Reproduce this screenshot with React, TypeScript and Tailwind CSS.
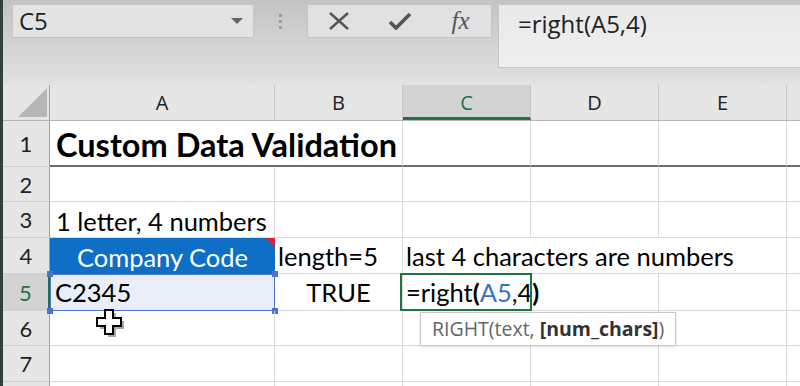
import React from "react";

const cellFont = { fontFamily: "Lato, 'Open Sans', sans-serif" };
const uiFont = { fontFamily: "'Open Sans', 'Noto Sans', sans-serif" };

const cols = [
  { key: "A", w: "w-[225px]" },
  { key: "B", w: "w-[128px]" },
  { key: "C", w: "w-[128px]" },
  { key: "D", w: "w-[128px]" },
  { key: "E", w: "w-[128px]" },
];

const RowHead = ({ n, h, active }: { n?: number; h: string; active?: boolean }) => (
  <div
    className={`${h} w-[47px] shrink-0 flex items-center justify-center text-[22px] border-b border-[#cfcfcf] ${
      active ? "bg-[#d3d3d3] text-[#217346] border-r-2 border-r-[#217346]" : "bg-[#e6e6e6] text-[#222] border-r border-r-[#9e9e9e]"
    }`}
    style={cellFont}
  >
    {n}
  </div>
);

const Cell = ({ w, className = "", children }: { w: string; className?: string; children?: React.ReactNode }) => (
  <div className={`${w} shrink-0 border-r border-b border-[#dadada] flex items-center ${className}`}>{children}</div>
);

const Cursor = () => (
  <svg width="30" height="30" viewBox="0 0 30 30">
    <path d="M11 3h8v8h8v8h-8v8h-8v-8H3v-8h8z" fill="#000" opacity="0.35" transform="translate(2 2)" />
    <path d="M10 2h8v8h8v8h-8v8h-8v-8H2v-8h8z" fill="#fff" stroke="#000" strokeWidth="2" />
  </svg>
);

export default function App() {
  return (
    <div className="relative w-[800px] h-[386px] overflow-hidden bg-white border-l-[3px] border-[#34403a]" style={cellFont}>
      {/* formula bar */}
      <div className="h-[85px] flex items-start pt-[4px] bg-gradient-to-b from-[#c3c3c3] to-[#e2e2e2]">
        <div className="ml-[9px] w-[242px] h-[34px] flex items-center justify-between pl-[6px] pr-[5px] bg-[#e3e3e3] border border-[#c6c6c6]">
          <span className="text-[24px] text-[#222]" style={uiFont}>
            C5
          </span>
          <svg width="12" height="8" viewBox="0 0 12 8" className="mr-[5px]">
            <path d="M0 1h12L6 7z" fill="#666" />
          </svg>
        </div>
        <div className="w-[53px] h-[34px] flex flex-col items-center justify-center gap-[3px]">
          <span className="w-[3px] h-[3px] bg-[#9d9d9d]" />
          <span className="w-[3px] h-[3px] bg-[#9d9d9d]" />
          <span className="w-[3px] h-[3px] bg-[#9d9d9d]" />
        </div>
        <div className="w-[185px] h-[34px] flex bg-[#e1e1e1] border border-[#c6c6c6]">
          <div className="flex-1 flex items-center justify-center">
            <svg width="22" height="18" viewBox="0 0 22 18">
              <path d="M2 1l18 16M20 1L2 17" stroke="#555" strokeWidth="2.4" />
            </svg>
          </div>
          <div className="flex-1 flex items-center justify-center">
            <svg width="24" height="18" viewBox="0 0 24 18">
              <path d="M2 10l6 6L22 2" stroke="#555" strokeWidth="3.6" fill="none" />
            </svg>
          </div>
          <div className="flex-1 flex items-center justify-center">
            <span className="text-[25px] italic text-[#555]" style={{ fontFamily: "'Liberation Serif', serif" }}>
              fx
            </span>
          </div>
        </div>
        <div className="ml-[6px] flex-1 h-[64px] pl-[19px] pt-[1px] bg-gradient-to-b from-[#e9e9e9] to-[#efefef] border border-[#c6c6c6] border-r-0">
          <span className="text-[24px] text-[#222]" style={uiFont}>
            =right(A5,4)
          </span>
        </div>
      </div>

      {/* column headers */}
      <div className="h-[36px] flex bg-[#e6e6e6] border-b border-[#b3b3b3]" style={uiFont}>
        <div className="w-[47px] shrink-0 border-r border-[#9e9e9e] flex items-end justify-end pr-[2px] pb-[3px]">
          <svg width="29" height="29" viewBox="0 0 29 29">
            <path d="M29 0v29H0z" fill="#b6b6b6" />
          </svg>
        </div>
        {cols.map((c) => (
          <div
            key={c.key}
            className={`${c.w} shrink-0 flex items-center justify-center text-[20px] border-r border-[#c8c8c8] ${
              c.key === "C" ? "bg-[#d3d3d3] text-[#217346] border-b-[3px] border-b-[#217346] pt-[3px]" : "text-[#222]"
            }`}
          >
            {c.key}
          </div>
        ))}
        <div className="flex-1" />
      </div>

      {/* row 1 */}
      <div className="flex h-[46px]">
        <RowHead n={1} h="h-[46px]" />
        <div className="w-[353px] shrink-0 border-r border-[#dadada] border-b-2 border-b-[#6b6b6b] flex items-center pl-[6px] pt-[5px]">
          <span className="text-[32.5px] font-bold text-black whitespace-nowrap">Custom Data Validation</span>
        </div>
        <Cell w="w-[128px]" className="border-b-2 border-b-[#6b6b6b]" />
        <Cell w="w-[128px]" className="border-b-2 border-b-[#6b6b6b]" />
        <Cell w="w-[128px]" className="border-b-2 border-b-[#6b6b6b]" />
        <div className="flex-1 border-b-2 border-[#6b6b6b]" />
      </div>

      {/* row 2 */}
      <div className="flex h-[35px]">
        <RowHead n={2} h="h-[35px]" />
        {cols.map((c) => (
          <Cell key={c.key} w={c.w} />
        ))}
        <div className="flex-1 border-b border-[#dadada]" />
      </div>

      {/* row 3 */}
      <div className="flex h-[36px] text-[25.5px] text-black">
        <RowHead n={3} h="h-[36px]" />
        <Cell w="w-[225px]" className="pl-[6px] pt-[4px]">
          1 letter, 4 numbers
        </Cell>
        <Cell w="w-[128px]" />
        <Cell w="w-[128px]" />
        <Cell w="w-[128px]" />
        <Cell w="w-[128px]" />
        <div className="flex-1 border-b border-[#dadada]" />
      </div>

      {/* row 4 */}
      <div className="flex h-[36px] text-[25.5px] text-black">
        <RowHead n={4} h="h-[36px]" />
        <div className="relative w-[225px] shrink-0 bg-[#0f6fc6] flex items-center justify-center pt-[2px] text-white">
          Company Code
          <svg width="9" height="9" viewBox="0 0 9 9" className="absolute top-0 right-0">
            <path d="M0 0h9v9z" fill="#e8202a" />
          </svg>
        </div>
        <Cell w="w-[128px]" className="pl-[3px] pt-[2px] whitespace-nowrap">
          length=5
        </Cell>
        <Cell w="w-[384px]" className="pl-[3px] pt-[2px] whitespace-nowrap">
          last 4 characters are numbers
        </Cell>
        <div className="flex-1 border-b border-[#dadada]" />
      </div>

      {/* row 5 */}
      <div className="flex h-[37px] text-[25.5px] text-black">
        <RowHead n={5} h="h-[37px]" active />
        <div className="relative w-[225px] shrink-0 bg-[#e9eef9] flex items-center pl-[5px]">
          C2345
          <div className="absolute inset-0 border border-[#4a74c9]" />
          <span className="absolute -top-[3px] -left-[3px] w-[6px] h-[6px] bg-[#4a74c9]" />
          <span className="absolute -top-[3px] -right-[3px] w-[6px] h-[6px] bg-[#4a74c9]" />
          <span className="absolute -bottom-[3px] -left-[3px] w-[6px] h-[6px] bg-[#4a74c9]" />
          <span className="absolute -bottom-[3px] -right-[3px] w-[6px] h-[6px] bg-[#4a74c9]" />
        </div>
        <Cell w="w-[128px]" className="justify-center">
          TRUE
        </Cell>
        <div className="relative w-[128px] shrink-0 border-r border-b border-[#dadada] flex items-center pl-[3px] whitespace-nowrap">
          =right<span className="font-bold">(</span>
          <span className="text-[#3b6fc4]">A5</span>,4<span className="font-bold">)</span>
          <div className="absolute -top-[1px] -left-[3px] -right-[2px] -bottom-[1px] border-2 border-[#217346]" />
          <div
            className="absolute top-[38px] left-[17px] z-10 w-[256px] h-[34px] bg-white border border-[#c8c8c8] shadow-sm flex items-center pl-[11px] text-[19.5px] text-[#666]"
            style={uiFont}
          >
            RIGHT(text,&nbsp;<span className="font-bold text-[#333]">[num_chars]</span>)
          </div>
        </div>
        <Cell w="w-[128px]" />
        <Cell w="w-[128px]" />
        <div className="flex-1 border-b border-[#dadada]" />
      </div>

      {/* row 6 */}
      <div className="flex h-[35px]">
        <RowHead n={6} h="h-[35px]" />
        <div className="relative w-[225px] shrink-0 border-r border-b border-[#dadada]">
          <div className="absolute left-[45px] -top-[3px]">
            <Cursor />
          </div>
        </div>
        {cols.slice(1).map((c) => (
          <Cell key={c.key} w={c.w} />
        ))}
        <div className="flex-1 border-b border-[#dadada]" />
      </div>

      {/* row 7 */}
      <div className="flex h-[36px]">
        <RowHead n={7} h="h-[36px]" />
        {cols.map((c) => (
          <Cell key={c.key} w={c.w} />
        ))}
        <div className="flex-1 border-b border-[#dadada]" />
      </div>

      {/* row 8, only its top edge is in view */}
      <div className="flex h-[20px]">
        <RowHead h="h-[20px]" />
        {cols.map((c) => (
          <Cell key={c.key} w={c.w} />
        ))}
        <div className="flex-1" />
      </div>
    </div>
  );
}
